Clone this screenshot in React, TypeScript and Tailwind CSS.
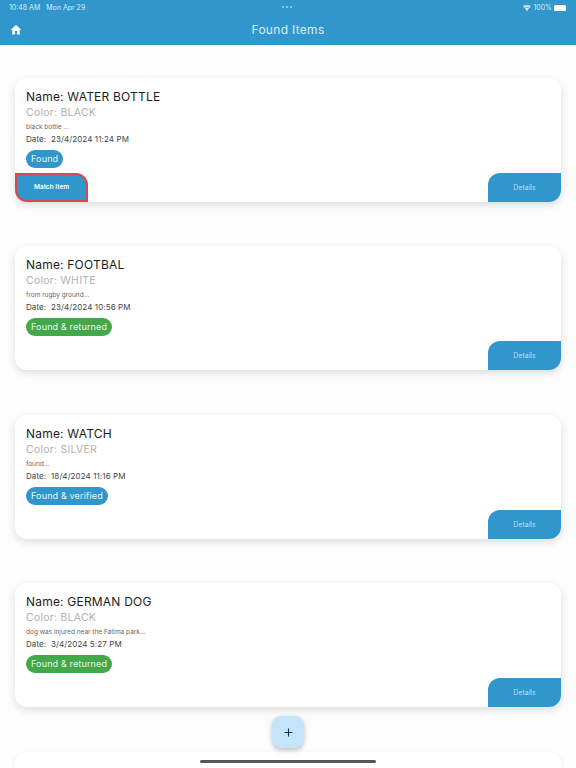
import React from "react";

type Item = { name: string; color: string; desc: string; date: string; status: string; green?: boolean; match?: boolean };

const items: Item[] = [
  { name: "WATER BOTTLE", color: "BLACK", desc: "black bottle ...", date: "23/4/2024 11:24 PM", status: "Found", match: true },
  { name: "FOOTBAL", color: "WHITE", desc: "from rugby ground...", date: "23/4/2024 10:56 PM", status: "Found & returned", green: true },
  { name: "WATCH", color: "SILVER", desc: "found...", date: "18/4/2024 11:16 PM", status: "Found & verified" },
  { name: "GERMAN DOG", color: "BLACK", desc: "dog was injured near the Fatima park...", date: "3/4/2024 5:27 PM", status: "Found & returned", green: true },
];

function Card({ item }: { item: Item }) {
  return (
    <div className="h-[124px] shrink-0 rounded-[12px] bg-white shadow-[0_3px_9px_rgba(0,0,0,0.13)] flex flex-col justify-between">
      <div className="pl-[11px] pt-[11px] flex flex-col items-start">
        <div className="h-[15px] text-[12px] leading-[15px] text-[#1c1c1c] tracking-[0.2px] font-['Inter',sans-serif]">Name: {item.name}</div>
        <div className="mt-[1px] h-[15px] text-[10.5px] leading-[15px] text-[#b0b0b0] tracking-[0.25px] font-['Inter',sans-serif]">Color: {item.color}</div>
        <div className="mt-[2px] h-[10px] text-[6.5px] leading-[10px] text-[#666666] font-['Inter',sans-serif]">{item.desc}</div>
        <div className="mt-[1px] h-[13px] text-[8px] leading-[13px] text-[#444444] tracking-[0.1px] font-['Inter',sans-serif] whitespace-pre">Date:  {item.date}</div>
        <div className={`mt-[4px] h-[18px] px-[5px] rounded-full text-[9px] leading-[18px] text-[#e8f6ee] tracking-[0.15px] font-['Inter',sans-serif] ${item.green ? "bg-[#43a84a]" : "bg-[#3196cb]"}`}>{item.status}</div>
      </div>
      <div className="flex justify-between items-end h-[29px]">
        {item.match ? (
          <div className="w-[73px] h-[29px] rounded-tr-[12px] rounded-bl-[12px] bg-[#3196cb] border-2 border-[#d9474f] text-[6.5px] font-semibold text-white flex items-center justify-center font-['Inter',sans-serif]">Match Item</div>
        ) : <div />}
        <div className="w-[73px] h-[29px] pt-[1px] rounded-tl-[12px] rounded-br-[12px] bg-[#3196cb] text-[7px] text-[#b9dff2] flex items-center justify-center font-['Inter',sans-serif]">Details</div>
      </div>
    </div>
  );
}

export default function App() {
  return (
    <div className="relative w-[576px] h-[768px] overflow-hidden bg-[#fdfdfe] font-['Inter',sans-serif]">
      <header className="h-[45px] bg-[#3196cb] relative text-white">
        <div className="h-[15px] pt-[1px] px-[9px] flex items-center justify-between text-[7px] text-[#d5ecf8]">
          <div className="flex gap-[6px]"><span>10:48 AM</span><span>Mon Apr 29</span></div>
          <div className="flex items-center gap-[2px] pr-[1px]">
            <svg width="8" height="6" viewBox="0 0 24 18" fill="#ffffff"><path d="M12 18l-3.600-4.500a5.800 5.800 0 0 1 7.200 0L12 18zM5.800 10.400l2 2.400a7 7 0 0 1 8.400 0l2-2.400a10 10 0 0 0-12.400 0zM2.600 6.400l2 2.500a13 13 0 0 1 14.800 0l2-2.500a16.500 16.500 0 0 0-18.800 0zM0 3.200l1.600 2a19 19 0 0 1 20.800 0l1.600-2a22 22 0 0 0-24 0z" /></svg>
            <span>100%</span>
            <div className="w-[12px] h-[6px] rounded-[1.5px] bg-white" />
          </div>
        </div>
        <div className="h-[30px] px-[10px] flex items-center">
          <svg width="12" height="12" viewBox="0 0 24 24" fill="#ffffff"><path d="M10 21v-7h4v7h5.500v-9H23L12 2 1 12h3.500v9z" /></svg>
          <div className="flex-1 text-center text-[12px] tracking-[0.3px] text-[#d9f0fb] pr-[12px]">Found Items</div>
        </div>
      </header>
      <main className="px-[15px] pt-[33px] flex flex-col gap-[44.4px]">
        {items.map((it) => <Card key={it.name} item={it} />)}
        <div className="h-[124px] shrink-0 rounded-[12px] bg-white shadow-[0_1px_6px_rgba(0,0,0,0.06)]" />
      </main>
      <div className="absolute left-[272px] top-[716px] w-[32px] h-[32px] rounded-[9px] bg-[#c4e4fa] shadow-[0_2px_5px_rgba(0,0,0,0.25)] flex items-center justify-center">
        <svg width="9" height="9" viewBox="0 0 9 9"><path d="M4.500 0.500v8M0.500 4.500h8" stroke="#1c2f3c" strokeWidth="1.100" /></svg>
      </div>
      <div className="absolute left-[200px] top-[760px] w-[176px] h-[3px] rounded-full bg-[#555555]" />
      <div className="absolute left-[282px] top-[6px] flex gap-[2px]">
        <div className="w-[2px] h-[2px] rounded-full bg-[#a9d8f0]" />
        <div className="w-[2px] h-[2px] rounded-full bg-[#a9d8f0]" />
        <div className="w-[2px] h-[2px] rounded-full bg-[#a9d8f0]" />
      </div>
    </div>
  );
}
